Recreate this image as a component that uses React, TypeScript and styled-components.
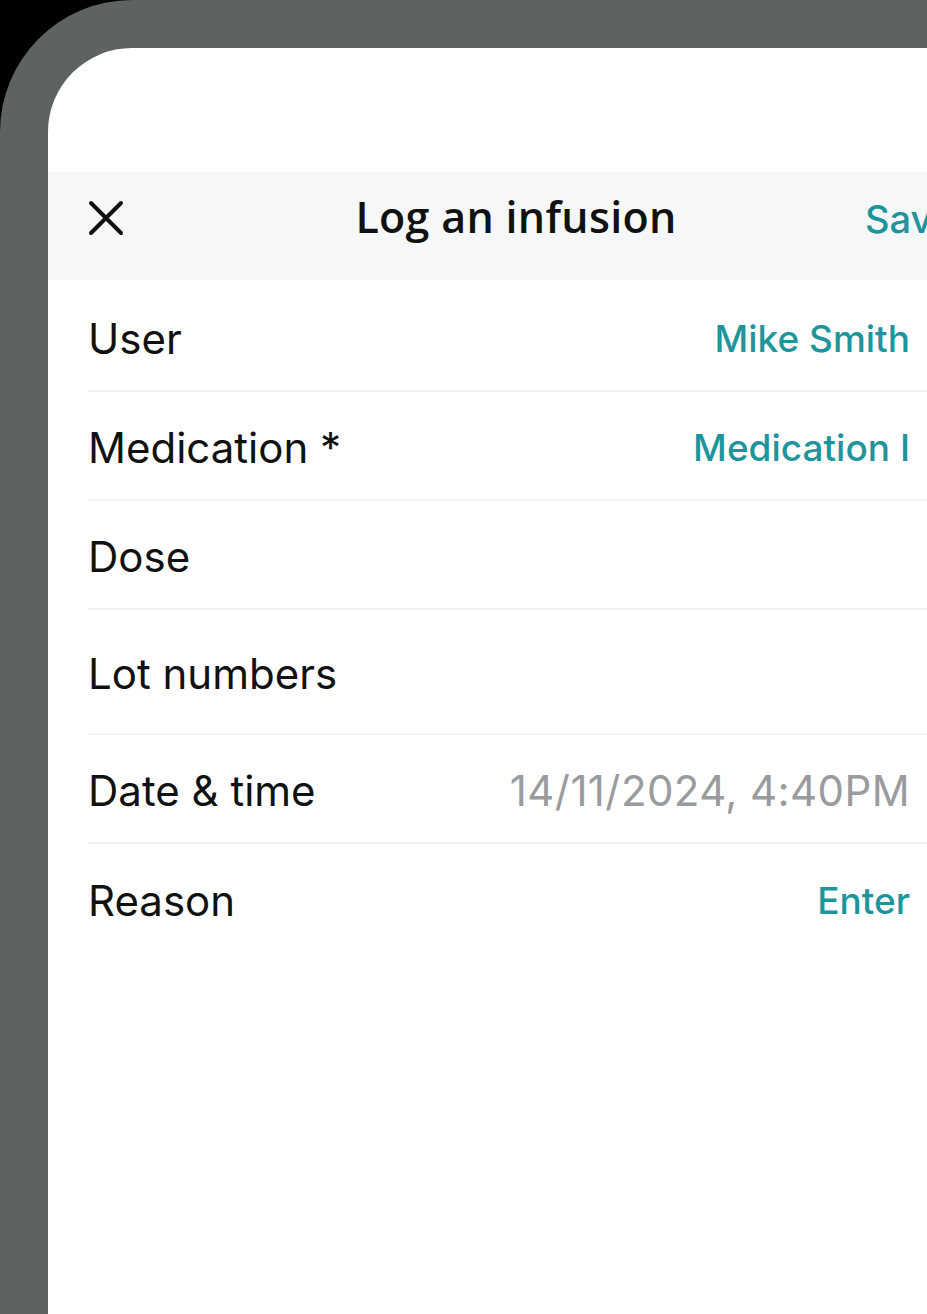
import styled, { createGlobalStyle } from 'styled-components';

interface FieldRow {
  label: string;
  value?: string;
  tone?: 'link' | 'muted';
  tall?: boolean;
}

const rows: FieldRow[] = [
  { label: 'User', value: 'Mike Smith', tone: 'link' },
  { label: 'Medication *', value: 'Medication I', tone: 'link' },
  { label: 'Dose' },
  { label: 'Lot numbers', tall: true },
  { label: 'Date & time', value: '14/11/2024, 4:40PM', tone: 'muted' },
  { label: 'Reason', value: 'Enter', tone: 'link' },
];

const App = () => {
  return (
    <>
      <GlobalStyle />
      <Frame>
        <Screen>
          <Header>
            <CloseBtn aria-label="Close">
              <svg width="36" height="36" viewBox="0 0 36 36" fill="none">
                <path d="M3 3L33 33M33 3L3 33" stroke="#111" strokeWidth="4" strokeLinecap="round" />
              </svg>
            </CloseBtn>
            <Title>Log an infusion</Title>
            <SaveBtn>Save</SaveBtn>
          </Header>
          <List>
            {rows.map(row => (
              <Row key={row.label} tall={row.tall}>
                <Label>{row.label}</Label>
                {row.value ? <Value tone={row.tone}>{row.value}</Value> : null}
              </Row>
            ))}
          </List>
        </Screen>
      </Frame>
    </>
  );
};

const GlobalStyle = createGlobalStyle`
  html, body {
    margin: 0;
    padding: 0;
    background: #000;
    overflow: hidden;
  }
  * {
    box-sizing: border-box;
  }
`;

const Frame = styled.div`
  width: 1000px;
  height: 1314px;
  background-color: #5e6362;
  border-top-left-radius: 132px;
  padding: 48px 0 0 48px;
`;

const Screen = styled.div`
  display: flex;
  flex-direction: column;
  width: 936px;
  height: 100%;
  background-color: #fff;
  border-top-left-radius: 84px;
  padding-top: 124px;
  overflow: hidden;
`;

const Header = styled.div`
  display: grid;
  grid-template-columns: 1fr auto 1fr;
  align-items: center;
  height: 108px;
  padding: 0 40px;
  background-color: #f6f7f8;
`;

const CloseBtn = styled.button`
  display: flex;
  align-items: center;
  justify-self: start;
  padding: 0;
  border: 0;
  background: none;
  margin-top: -16px;
`;

const Title = styled.div`
  font-family: 'Open Sans', 'Noto Sans', sans-serif;
  font-weight: 600;
  font-size: 43px;
  color: #111;
  margin-top: -20px;
  letter-spacing: 0.3px;
`;

const SaveBtn = styled.div`
  justify-self: end;
  margin-right: -10px;
  font-family: 'Inter', 'Liberation Sans', sans-serif;
  font-weight: 500;
  font-size: 38px;
  color: #1e959c;
  margin-top: -14px;
`;

const List = styled.div`
  display: flex;
  flex-direction: column;
  padding-left: 40px;
  padding-top: 3px;
`;

const Row = styled.div<{ tall?: boolean }>`
  display: flex;
  align-items: center;
  justify-content: space-between;
  height: ${props => (props.tall ? '125px' : '109px')};
  padding: 4px 74px 0 0;
  border-bottom: 2px solid #f1f2f2;
  &:last-child {
    border-bottom: 0;
  }
`;

const Label = styled.span`
  font-family: 'Inter', 'Liberation Sans', sans-serif;
  font-size: 42px;
  color: #111;
`;

const Value = styled.span<{ tone?: 'link' | 'muted' }>`
  font-family: 'Inter', 'Liberation Sans', sans-serif;
  font-size: ${props => (props.tone === 'muted' ? '42px' : '37px')};
  font-weight: ${props => (props.tone === 'muted' ? 400 : 500)};
  letter-spacing: ${props => (props.tone === 'muted' ? '0.4px' : '0')};
  color: ${props => (props.tone === 'muted' ? '#9a9b9f' : '#1e959c')};
`;

export default App;
